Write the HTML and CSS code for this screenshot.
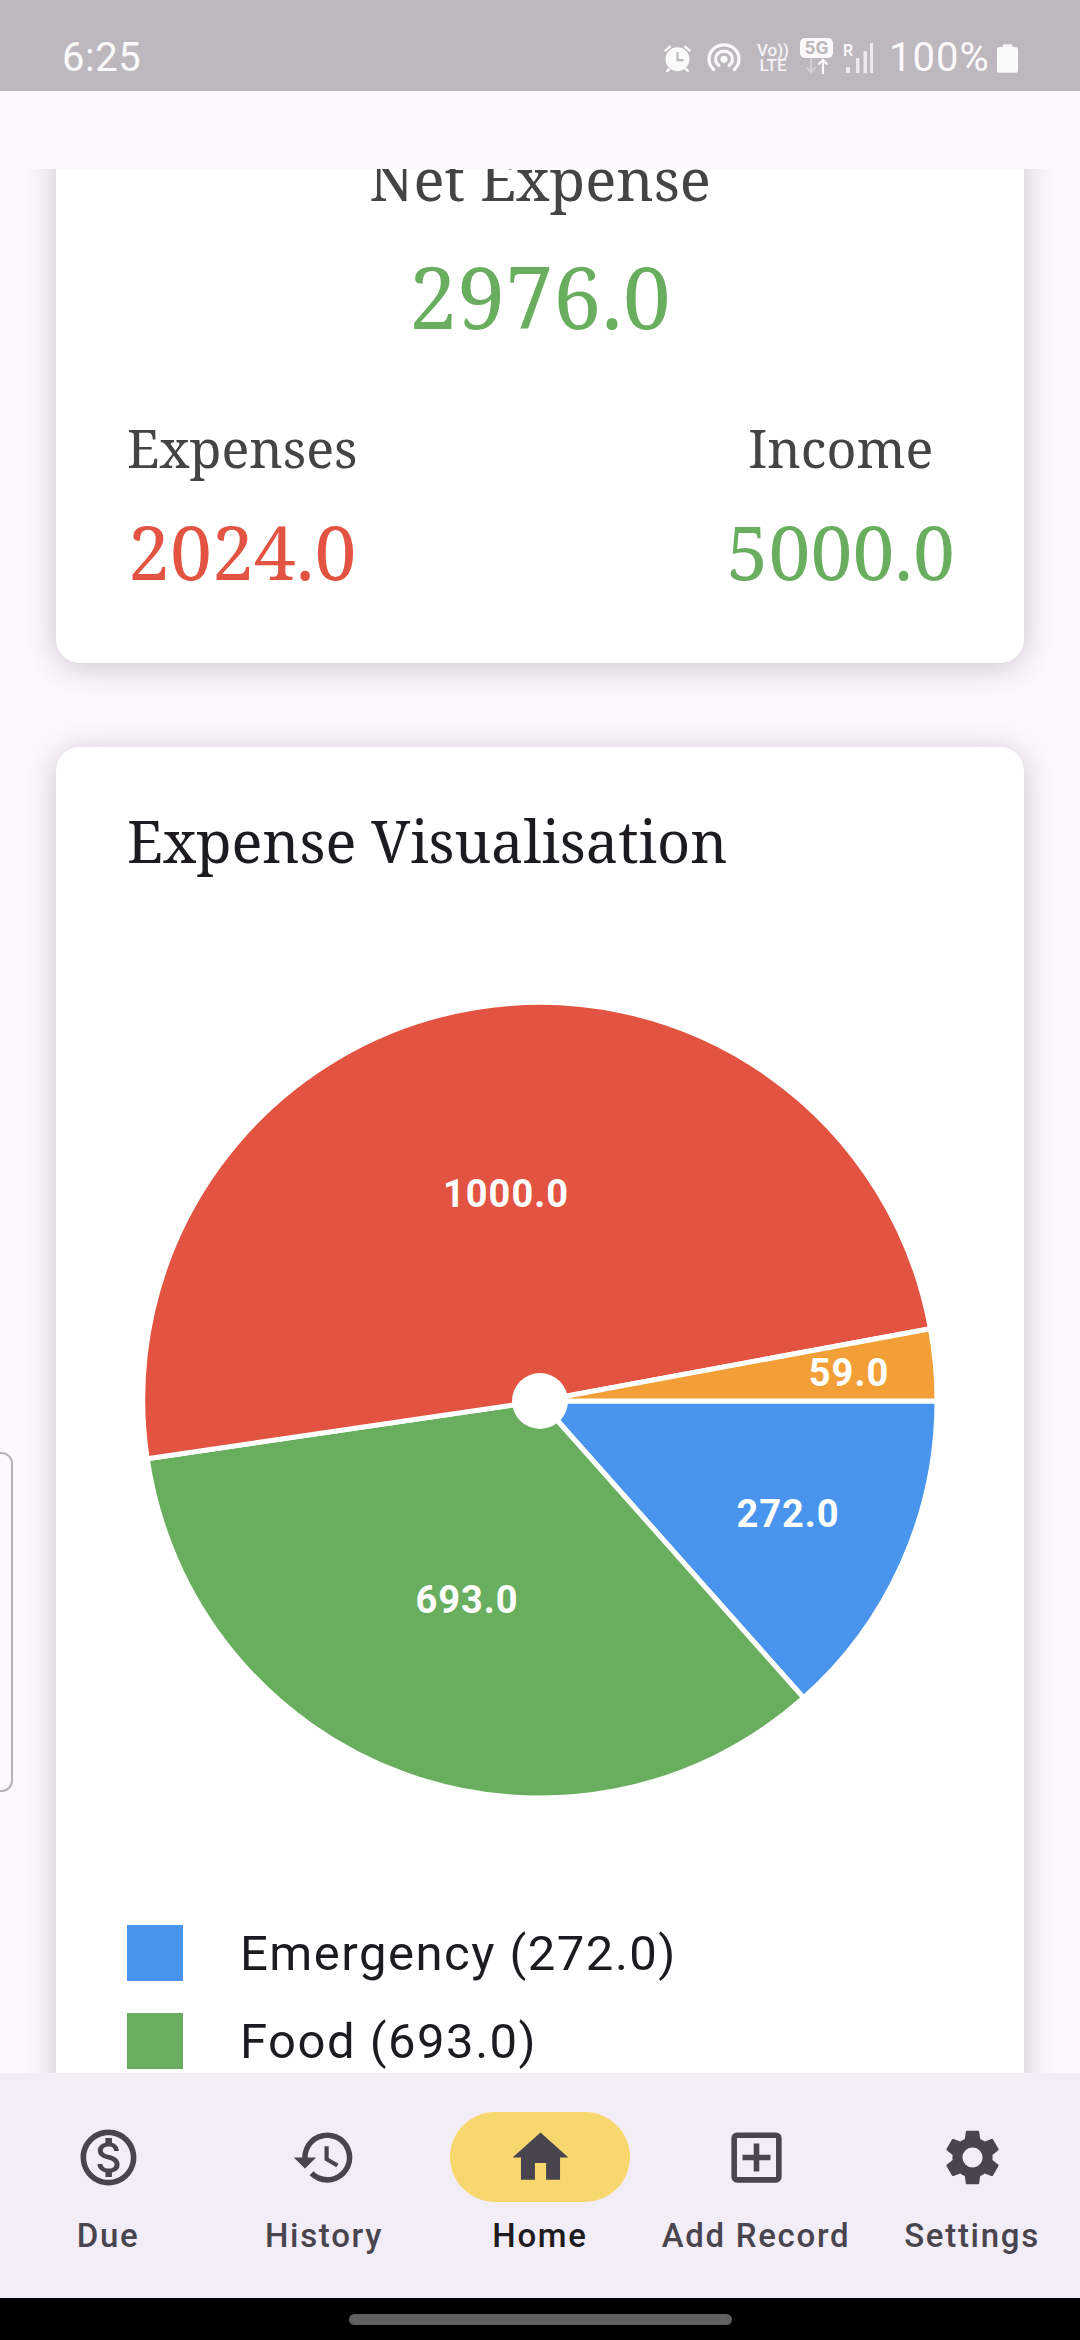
FILE: index.html
```html
<!DOCTYPE html>
<html lang="en">
<head>
<meta charset="utf-8">
<title>Expense Home</title>
<link rel="stylesheet" href="styles.css">
</head>
<body>
<div class="phone">
  <header class="status">
    <span class="time">6:25</span>
    <div class="status-right">
      <svg class="si" width="29" height="30" viewBox="0 0 34 35"><g fill="#fafafa"><circle cx="17" cy="19" r="14"/><path d="M1 8.500 8 2.500l1.800 2-7 6zM33 8.500l-7-6-1.800 2 7 6zM6 29l-3 4 2 1.500 4-3.500zM28 29l3 4-2 1.500-4-3.500z"/></g><path d="M17 10.500V20h7" fill="none" stroke="#bdb8bd" stroke-width="2.400"/></svg>
      <svg class="si m15" width="34" height="29" viewBox="0 0 36 31"><g fill="none" stroke="#fafafa" stroke-width="3.400" stroke-linecap="round"><path d="M7 28.500C3.500 25 2 21 2 17 2 8.500 9 2 18 2s16 6.500 16 15c0 4-1.500 8-5 11.500"/><path d="M12.500 24c-2.300-1.800-3.500-4-3.500-6.800 0-5 4-8.500 9-8.500s9 3.500 9 8.500c0 2.800-1.200 5-3.500 6.800"/></g><circle cx="18" cy="17.500" r="3.800" fill="#fafafa"/></svg>
      <div class="volte m17"><span>Vo))</span><span>LTE</span></div>
      <div class="fiveg m12"><span class="fiveg-box">5G</span><svg width="24" height="16" viewBox="0 0 24 16"><path d="M6 1v13M1.500 9.500 6 14l4.500-4.500" fill="none" stroke="#d4d0d4" stroke-width="2"/><path d="M18 16V2M13.500 6.500 18 2l4.500 4.500" fill="none" stroke="#fafafa" stroke-width="2.200"/></svg></div>
      <div class="signal m10"><span class="roam">R</span><svg width="30" height="30" viewBox="0 0 30 30"><path d="M3 24h4v6H3zM13 15h3.500v15H13zM20.500 8H24v22h-3.500zM27 0h3v30h-3z" fill="#eceaec"/></svg></div>
      <span class="batt-text">100%</span>
      <svg class="si m7" width="21" height="30" viewBox="0 0 22 31"><path d="M6 2.500A1.500 1.500 0 0 1 7.500 1h7A1.500 1.500 0 0 1 16 2.500V4h3a3 3 0 0 1 3 3v21a3 3 0 0 1-3 3H3a3 3 0 0 1-3-3V7a3 3 0 0 1 3-3h3z" fill="#fafafa"/></svg>
    </div>
  </header>
  <div class="appbar"></div>

  <main class="scroll">
    <div class="scroll-inner">
      <section class="card summary">
        <h2 class="net-label">Net Expense</h2>
        <div class="net-value green">2976.0</div>
        <div class="split">
          <div class="split-col">
            <div class="split-label">Expenses</div>
            <div class="split-value red">2024.0</div>
          </div>
          <div class="split-col">
            <div class="split-label">Income</div>
            <div class="split-value green">5000.0</div>
          </div>
        </div>
      </section>
      <section class="card chart">
        <h2 class="chart-title">Expense Visualisation</h2>
        <div class="pie-wrap">
          <svg class="pie" width="800" height="800" viewBox="-400 -400 800 800">
            <g stroke="#fff" stroke-width="5">
              <path d="M0 0L397 0A397 397 0 0 1 263.600 296.900Z" fill="#4995ed"/>
              <path d="M0 0L263.600 296.900A397 397 0 0 1 -392.800 57.700Z" fill="#69ae5f"/>
              <path d="M0 0L-392.800 57.700A397 397 0 0 1 390.400 -72.300Z" fill="#e25341"/>
              <path d="M0 0L390.400 -72.300A397 397 0 0 1 397 0Z" fill="#f29f38"/>
            </g>
            <circle r="28" fill="#fff"/>
          </svg>
          <span class="slice-label l-rent">1000.0</span>
          <span class="slice-label l-other">59.0</span>
          <span class="slice-label l-emer">272.0</span>
          <span class="slice-label l-food">693.0</span>
        </div>
        <ul class="legend">
          <li class="legend-row"><span class="swatch blue"></span><span>Emergency (272.0)</span></li>
          <li class="legend-row"><span class="swatch greenbg"></span><span>Food (693.0)</span></li>
        </ul>
      </section>
    </div>
    <div class="side-handle"></div>
  </main>

  <nav class="nav">
    <div class="nav-item">
      <div class="nav-icon"><svg width="67" height="67" viewBox="0 0 24 24" fill="#49454f"><path d="M12 2C6.480 2 2 6.480 2 12s4.480 10 10 10 10-4.480 10-10S17.520 2 12 2zm0 18c-4.410 0-8-3.590-8-8s3.590-8 8-8 8 3.590 8 8-3.590 8-8 8zm.310-8.860c-1.770-.450-2.340-.940-2.340-1.670 0-.840.790-1.430 2.100-1.430 1.380 0 1.900.660 1.940 1.640h1.710c-.050-1.340-.870-2.570-2.490-2.970V5H10.900v1.690c-1.510.320-2.720 1.300-2.720 2.810 0 1.790 1.490 2.690 3.660 3.210 1.950.460 2.340 1.150 2.310 1.870-.030.520-.380 1.350-2.100 1.350-1.510 0-2.130-.750-2.220-1.640H8.040c.100 1.700 1.360 2.660 2.860 2.970V19h2.340v-1.670c1.520-.290 2.720-1.160 2.730-2.770-.010-2.200-1.900-2.960-3.660-3.420z"/></svg></div>
      <span class="nav-label">Due</span>
    </div>
    <div class="nav-item">
      <div class="nav-icon"><svg width="67" height="67" viewBox="0 0 24 24" fill="#49454f"><path d="M13 3a9 9 0 0 0-9 9H1l3.890 3.890.07.14L9 12H6c0-3.870 3.130-7 7-7s7 3.130 7 7-3.130 7-7 7c-1.930 0-3.680-.79-4.940-2.060l-1.420 1.420A8.954 8.954 0 0 0 13 21a9 9 0 0 0 0-18zm-1 5v5l4.250 2.520.77-1.280-3.520-2.090V8z"/></svg></div>
      <span class="nav-label">History</span>
    </div>
    <div class="nav-item active">
      <div class="nav-icon pill"><svg width="67" height="67" viewBox="0 0 24 24" fill="#49454f"><path d="M10 20v-6h4v6h5v-8h3L12 3 2 12h3v8z"/></svg></div>
      <span class="nav-label">Home</span>
    </div>
    <div class="nav-item">
      <div class="nav-icon"><svg width="67" height="67" viewBox="0 0 24 24" fill="#49454f"><path d="M19 3H5a2 2 0 0 0-2 2v14a2 2 0 0 0 2 2h14a2 2 0 0 0 2-2V5a2 2 0 0 0-2-2zm0 16H5V5h14v14zm-8-2h2v-4h4v-2h-4V7h-2v4H7v2h4z"/></svg></div>
      <span class="nav-label">Add Record</span>
    </div>
    <div class="nav-item">
      <div class="nav-icon"><svg width="67" height="67" viewBox="0 0 24 24" fill="#49454f"><path d="M19.140 12.940c.04-.3.060-.61.060-.94 0-.32-.02-.64-.07-.94l2.030-1.580a.49.49 0 0 0 .12-.61l-1.920-3.320a.488.488 0 0 0-.59-.22l-2.390.96c-.5-.38-1.030-.7-1.620-.94l-.36-2.540a.484.484 0 0 0-.48-.41h-3.840c-.24 0-.43.170-.47.410l-.36 2.540c-.59.240-1.130.570-1.620.94l-2.390-.96c-.22-.08-.47 0-.59.220L2.740 8.870c-.12.210-.08.470.12.610l2.030 1.580c-.05.300-.09.630-.09.940s.02.640.07.940l-2.030 1.580a.49.49 0 0 0-.12.610l1.920 3.320c.12.220.37.290.59.220l2.390-.96c.5.380 1.030.7 1.620.94l.36 2.540c.05.240.24.410.48.410h3.840c.24 0 .44-.17.470-.41l.36-2.540c.59-.24 1.130-.56 1.620-.94l2.390.96c.22.080.47 0 .59-.22l1.920-3.320c.12-.22.070-.47-.12-.61l-2.010-1.580zM12 15.600A3.610 3.610 0 0 1 8.400 12c0-1.980 1.620-3.600 3.600-3.600s3.600 1.620 3.600 3.600-1.620 3.600-3.600 3.600z"/></svg></div>
      <span class="nav-label">Settings</span>
    </div>
  </nav>
  <footer class="gesture"><div class="gesture-bar"></div></footer>
</div>
</body>
</html>
```
FILE: styles.css
```css
* { box-sizing: border-box; }
html, body { margin: 0; padding: 0; }
body { width: 1080px; height: 2340px; overflow: hidden; background: #000; font-family: Roboto, sans-serif; }
.phone { width: 1080px; height: 2340px; display: flex; flex-direction: column; background: #fef8fe; }

.status { height: 91px; flex: none; background: #bdb8bd; color: #fafafa; display: flex; align-items: center; justify-content: space-between; padding: 24px 62px 0 62px; }
.time { font-size: 40px; font-weight: 400; letter-spacing: .5px; line-height: 48px; }
.status-right { display: flex; align-items: center; }
.si { display: block; }
.m7 { margin-left: 7px; }
.m10 { margin-left: 10px; }
.m12 { margin-left: 12px; }
.m15 { margin-left: 15px; }
.m17 { margin-left: 17px; }
.volte { display: flex; flex-direction: column; font-size: 17px; line-height: 15px; font-weight: 500; color: #f4f2f4; text-align: center; width: 30px; white-space: nowrap; align-items: center; }
.fiveg { display: flex; flex-direction: column; align-items: center; width: 33px; margin-top: -4px; }
.fiveg-box { width: 33px; background: #fafafa; color: #bdb8bd; font-size: 19px; font-weight: 700; line-height: 20px; text-align: center; border-radius: 5px; }
.fiveg svg { display: block; }
.signal { width: 30px; height: 30px; position: relative; }
.roam { font-size: 16px; font-weight: 500; position: absolute; left: 0; top: 0; line-height: 16px; }
.signal svg { display: block; }
.batt-text { font-size: 40px; font-weight: 400; letter-spacing: 1px; line-height: 48px; margin-left: 16px; width: 101px; white-space: nowrap; }

.appbar { height: 78px; flex: none; background: #fef8fe; position: relative; z-index: 2; }

.scroll { flex: 1; min-height: 0; overflow: hidden; position: relative; }
.scroll-inner { margin-top: -86px; padding: 0 56px; display: flex; flex-direction: column; gap: 84px; }
.card { background: #fff; border-radius: 24px; box-shadow: 0 4px 32px rgba(50, 35, 60, .25); }

.summary { height: 580px; padding: 64px 71px 0; font-family: "Noto Serif", "DejaVu Serif Condensed", "DejaVu Serif", serif; }
.net-label { margin: 0; text-align: center; font-weight: 400; font-size: 58px; line-height: 64px; color: #444; }
.net-value { text-align: center; font-size: 86px; line-height: 100px; margin-top: 35px; }
.split { display: flex; justify-content: space-between; margin: 70px -2px 0 0; }
.split-col { display: flex; flex-direction: column; align-items: center; }
.split-label { font-size: 52px; line-height: 64px; color: #444; }
.split-value { font-size: 75px; line-height: 92px; margin-top: 25px; }
.green { color: #69ae5f; }
.red { color: #e25341; }

.chart { height: 1500px; padding: 58px 0 0 71px; position: relative; font-family: "Noto Serif", "DejaVu Serif Condensed", "DejaVu Serif", serif; }
.chart-title { margin: 0; font-weight: 400; font-size: 57.6px; line-height: 72px; color: #1d1b20; }
.pie-wrap { position: relative; width: 800px; height: 800px; margin: 124px 0 0 13px; font-family: Roboto, sans-serif; }
.pie { display: block; }
.slice-label { position: absolute; color: #fff; font-size: 38px; font-weight: 700; letter-spacing: 1px; line-height: 44px; transform: translate(-50%, -50%); }
.l-rent { left: 366px; top: 193px; }
.l-other { left: 709px; top: 372px; }
.l-emer { left: 648px; top: 513px; }
.l-food { left: 327px; top: 599px; }

.legend { list-style: none; margin: 124px 0 0; padding: 0; display: flex; flex-direction: column; gap: 32px; font-family: Roboto, sans-serif; font-size: 49px; letter-spacing: 1.5px; color: #1d1b20; }
.legend-row { display: flex; align-items: center; gap: 57px; height: 56px; }
.swatch { width: 56px; height: 56px; flex: none; }
.blue { background: #4995ed; }
.greenbg { background: #69ae5f; }

.side-handle { position: absolute; left: -10px; top: 1283px; width: 23px; height: 340px; border: 2.500px solid #b5b2b7; border-radius: 12px; }

.nav { height: 225px; flex: none; background: #f3edf8; display: grid; grid-template-columns: repeat(5, 1fr); position: relative; z-index: 2; }
.nav-item { display: flex; flex-direction: column; align-items: center; padding-top: 39px; }
.nav-icon { width: 180px; height: 90px; border-radius: 45px; display: flex; align-items: center; justify-content: center; }
.pill { background: #f8d76e; }
.nav-label { font-size: 33px; font-weight: 500; line-height: 44px; letter-spacing: 1.7px; color: #49454f; margin-top: 12px; white-space: nowrap; }
.active .nav-label { color: #1d1b20; }

.gesture { height: 42px; flex: none; background: #000; padding-top: 16px; display: flex; justify-content: center; }
.gesture-bar { width: 383px; height: 11px; border-radius: 6px; background: #606060; }
```
